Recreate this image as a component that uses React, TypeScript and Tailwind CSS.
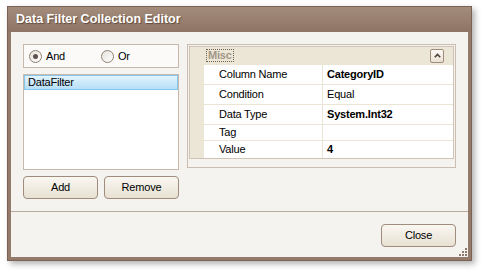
import React from "react";

const rows = [
  { name: "Column Name", value: "CategoryID", bold: true, h: "h-[20px]" },
  { name: "Condition", value: "Equal", bold: false, h: "h-[20px]" },
  { name: "Data Type", value: "System.Int32", bold: true, h: "h-[20px]" },
  { name: "Tag", value: "", bold: false, h: "h-[16px]" },
  { name: "Value", value: "4", bold: true, h: "h-[18px]" },
];

const Radio = ({ label, checked }: { label: string; checked?: boolean }) => (
  <div className="flex w-[72px] items-center gap-[4px]">
    <span className="flex h-[13px] w-[13px] items-center justify-center rounded-full border border-[#8e8174] bg-gradient-to-br from-[#e6e2db] to-white">
      {checked && <span className="h-[5px] w-[5px] rounded-full bg-[#5e534b]" />}
    </span>
    <span>{label}</span>
  </div>
);

const Button = ({ label, w }: { label: string; w: string }) => (
  <button
    className={`flex h-[23px] ${w} items-center justify-center rounded-[4px] border border-[#a08c7c] bg-gradient-to-b from-[#f9f7f2] to-[#e8e1d2] text-[11px] text-black`}
  >
    {label}
  </button>
);

export default function App() {
  return (
    <div
      className="h-[277px] w-[486px] bg-white pl-[7px] pt-[6px] text-[11px] tracking-[-0.2px] text-black"
      style={{ fontFamily: '"Liberation Sans", Arial, sans-serif' }}
    >
      <div className="flex h-[255px] w-[465px] flex-col border border-[#7a6354] bg-[#937a6a] shadow-[3px_3px_6px_rgba(0,0,0,0.3)]">
        {/* title bar */}
        <div className="flex h-[25px] items-center bg-gradient-to-b from-[#a48c7c] to-[#8d7464] pl-[8px] text-[12.5px] font-bold tracking-normal text-white [text-shadow:1px_1px_1px_rgba(60,40,30,0.6)]">
          Data Filter Collection Editor
        </div>

        <div className="relative mx-[3px] mb-[3px] flex flex-1 flex-col bg-[#f5f3ef]">
          {/* main area */}
          <div className="flex gap-[8px] px-[12px] pt-[12px] pb-[12px]">
            <div className="flex w-[156px] flex-col gap-[6px]">
              <div className="flex h-[24px] items-center border border-[#c8b9ab] bg-[#fbfaf8] pl-[5px]">
                <Radio label="And" checked />
                <Radio label="Or" />
              </div>
              <div className="h-[96px] border border-[#c8b9ab] bg-white">
                <div className="flex h-[15px] items-center border border-[#86c6ec] bg-gradient-to-b from-[#e2f3fc] to-[#b6dff7] pl-[3px]">
                  DataFilter
                </div>
              </div>
              <div className="flex gap-[6px]">
                <Button label="Add" w="w-[75px]" />
                <Button label="Remove" w="w-[75px]" />
              </div>
            </div>

            {/* property grid */}
            <div className="h-[124px] w-[270px] border border-[#cbbdb0] bg-[#f5f3ef] p-[1px]">
              <div className="border border-[#cfc3b5] bg-[#ece6d7]">
                <div className="flex h-[17px] items-center justify-between pl-[16px] pr-[9px]">
                  <span className="border border-dotted border-[#6e6054] px-[1px] leading-[11px] font-bold text-[#a49686]">
                    Misc
                  </span>
                  <span className="flex h-[14px] w-[14px] items-center justify-center rounded-[2px] border border-[#a08c7c] bg-gradient-to-b from-[#fbf9f5] to-[#e9e2d4]">
                    <svg width="7" height="5" viewBox="0 0 7 5">
                      <polyline points="0.8,4.2 3.5,1.5 6.2,4.2" fill="none" stroke="#4e4038" strokeWidth="1.6" />
                    </svg>
                  </span>
                </div>
                <div className="ml-[14px]">
                  {rows.map((r) => (
                    <div key={r.name} className={`flex ${r.h} border-t border-[#ebe5d6] bg-white`}>
                      <div className="flex w-[119px] items-center border-r border-[#ebe5d6] pl-[15px]">
                        {r.name}
                      </div>
                      <div className={`flex flex-1 items-center pl-[4px] ${r.bold ? "font-bold" : ""}`}>
                        {r.value}
                      </div>
                    </div>
                  ))}
                </div>
              </div>
            </div>
          </div>

          <div className="h-px bg-[#bba99a]" />

          <div className="flex justify-end px-[12px] pt-[12px]">
            <Button label="Close" w="w-[75px]" />
          </div>

          {/* size grip */}
          <svg className="absolute right-[1px] bottom-[1px]" width="9" height="9" viewBox="0 0 9 9">
            <rect x="7" y="1" width="2" height="2" fill="#8f7b6d" />
            <rect x="4" y="4" width="2" height="2" fill="#8f7b6d" />
            <rect x="7" y="4" width="2" height="2" fill="#8f7b6d" />
            <rect x="1" y="7" width="2" height="2" fill="#8f7b6d" />
            <rect x="4" y="7" width="2" height="2" fill="#8f7b6d" />
            <rect x="7" y="7" width="2" height="2" fill="#8f7b6d" />
          </svg>
        </div>
      </div>
    </div>
  );
}
